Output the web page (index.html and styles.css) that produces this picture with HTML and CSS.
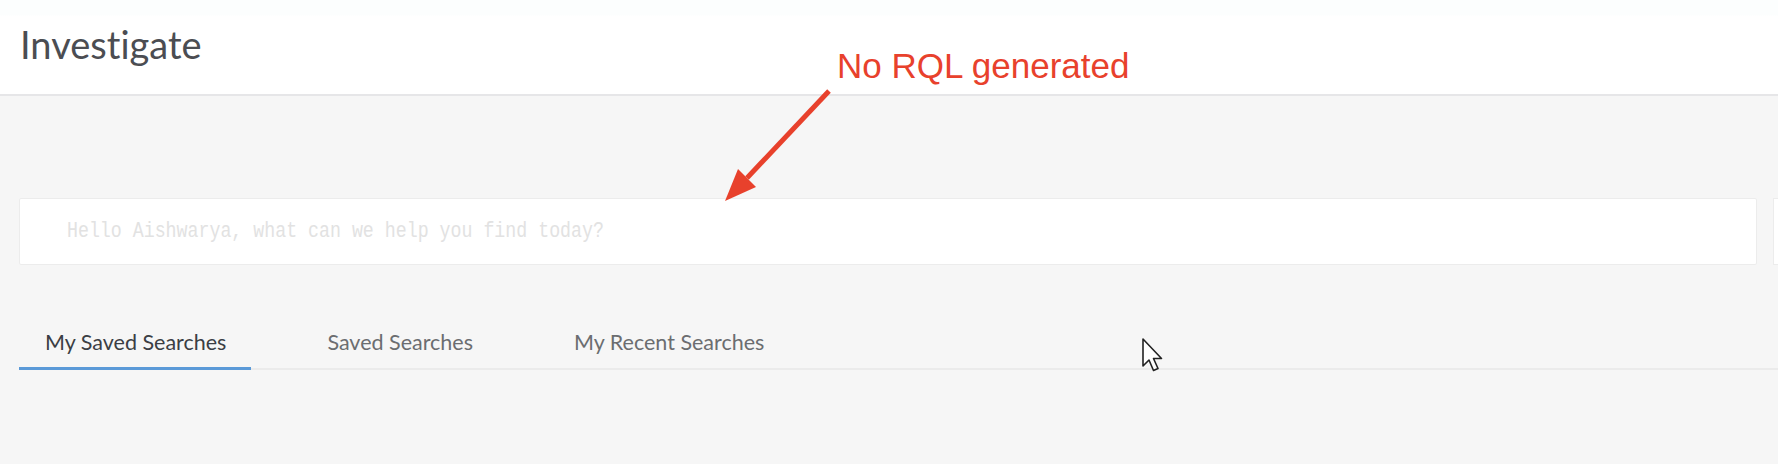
FILE: index.html
```html
<!DOCTYPE html>
<html lang="en">
<head>
<meta charset="utf-8">
<title>Investigate</title>
<link rel="stylesheet" href="styles.css">
</head>
<body>
<div class="page">
  <header class="topbar">
    <h1 class="title">Investigate</h1>
  </header>
  <main class="content">
    <div class="search-row">
      <div class="search-box">
        <span class="placeholder">Hello Aishwarya, what can we help you find today?</span>
      </div>
      <div class="search-side"></div>
    </div>
    <nav class="tabs">
      <div class="tab active">My Saved Searches</div>
      <div class="tab">Saved Searches</div>
      <div class="tab">My Recent Searches</div>
    </nav>
  </main>

  <div class="annotation">No RQL generated</div>
  <svg class="arrow" width="1778" height="464" viewBox="0 0 1778 464">
    <line x1="829" y1="91" x2="747" y2="178" stroke="#e8412c" stroke-width="5"/>
    <polygon points="725,201 756,187 738,169" fill="#e8412c"/>
  </svg>
  <svg class="cursor" width="26" height="38" viewBox="0 0 26 38">
    <path d="M2 2 L2 29 L8 23 L12.5 33.5 L17 31.5 L12.5 21.5 L20.5 21.5 Z" fill="#fff" stroke="#222" stroke-width="1.6" stroke-linejoin="round"/>
  </svg>
</div>
</body>
</html>
```

FILE: styles.css
```css
html, body {
  margin: 0;
  padding: 0;
}
body {
  background: #f6f6f6;
  font-family: Lato, "Open Sans", sans-serif;
  font-variant-ligatures: none;
  overflow: hidden;
  width: 1778px;
  height: 464px;
}
.page {
  position: relative;
  width: 1778px;
  height: 464px;
  overflow: hidden;
}
.topbar {
  height: 94px;
  background: linear-gradient(#fcfefe 0, #fcfefe 15px, #ffffff 16px);
  border-bottom: 2px solid #e6e6e8;
  padding: 0 0 0 20px;
  box-sizing: content-box;
}
.title {
  margin: 0;
  padding-top: 21px;
  font-family: Lato, sans-serif;
  font-weight: 400;
  font-size: 38px;
  line-height: normal;
  color: #4b4d52;
  font-variant-ligatures: none;
}
.content {
  padding: 0 0 0 19px;
}
.search-row {
  display: flex;
  gap: 16px;
  margin-top: 102px;
  overflow: hidden;
}
.search-box {
  flex: 0 0 1738px;
  height: 67px;
  box-sizing: border-box;
  background: #ffffff;
  border: 1px solid #ececec;
  border-radius: 2px;
  display: flex;
  align-items: center;
  padding-left: 47px;
}
.search-side {
  flex: 0 0 200px;
  height: 67px;
  box-sizing: border-box;
  background: #ffffff;
  border: 1px solid #ececec;
}
.placeholder {
  display: inline-block;
  font-family: "Liberation Mono", monospace;
  font-size: 22px;
  color: #e2e2e2;
  white-space: nowrap;
  transform: scaleX(0.83);
  transform-origin: left center;
}
.tabs {
  display: flex;
  gap: 50px;
  margin-top: 64px;
  border-bottom: 2px solid #ebebeb;
}
.tab {
  padding: 0 25px 12px 26px;
  font-size: 21.5px;
  line-height: 26px;
  color: #6b6d70;
  margin-bottom: -2px;
  border-bottom: 3px solid transparent;
}
.tab.active {
  color: #3b3e44;
  border-bottom-color: #5b9ad8;
}
.annotation {
  position: absolute;
  left: 837px;
  top: 46px;
  font-family: "Liberation Sans", Arial, sans-serif;
  font-size: 35px;
  line-height: normal;
  color: #e8412c;
}
.arrow {
  position: absolute;
  left: 0;
  top: 0;
  pointer-events: none;
}
.cursor {
  position: absolute;
  left: 1141px;
  top: 337px;
}
```
